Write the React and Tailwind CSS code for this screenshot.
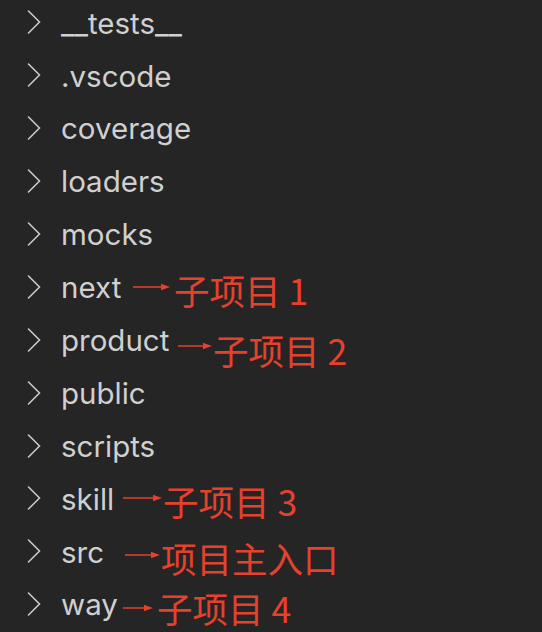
import React from "react";

const rows = [
  { name: "__tests__" },
  { name: ".vscode" },
  { name: "coverage" },
  { name: "loaders" },
  { name: "mocks" },
  { name: "next", note: { x1: 133, x2: 170, ay: 0, tx: 174, ty: 3, text: "子项目 1" } },
  { name: "product", note: { x1: 178, x2: 212, ay: 6, tx: 213, ty: 10, text: "子项目 2" } },
  { name: "public" },
  { name: "scripts" },
  { name: "skill", note: { x1: 123, x2: 162, ay: 0, tx: 163, ty: 2, text: "子项目 3" } },
  { name: "src", note: { x1: 125, x2: 160, ay: 4, tx: 161, ty: 6, text: "项目主入口" } },
  { name: "way", note: { x1: 123, x2: 153, ay: 4, tx: 157, ty: 4, text: "子项目 4" } },
];

function Chevron() {
  return (
    <svg width="14" height="24" viewBox="0 0 14 24" className="shrink-0">
      <polyline points="1.5,1 12.5,12 1.5,23" fill="none" stroke="#c8c8c8" strokeWidth="1.6" strokeLinejoin="miter" strokeLinecap="round" />
    </svg>
  );
}

function Arrow({ w }) {
  return (
    <svg width={w} height="10" viewBox={`0 0 ${w} 10`}>
      <line x1="0" y1="5" x2={w - 7} y2="5" stroke="#e6412c" strokeWidth="1.5" />
      <polygon points={`${w - 9},1.8 ${w},5 ${w - 9},8.2`} fill="#e6412c" />
    </svg>
  );
}

export default function App() {
  return (
    <div className="w-[542px] h-[632px] bg-[#252526] overflow-hidden">
      <div className="mt-[-4px]">
        {rows.map((r) => (
          <div key={r.name} className="relative h-[52.9px] flex items-center pl-[27px]">
            <Chevron />
            <span
              className="ml-[20px] text-[29.5px] leading-none text-[#d0d0d0] whitespace-nowrap translate-y-[1px]"
              style={{ fontFamily: "Inter, 'Noto Sans', sans-serif" }}
            >
              {r.name}
            </span>
            {r.note && (
              <>
                <div
                  className="absolute top-0 h-full flex items-center"
                  style={{ left: r.note.x1, transform: `translateY(${r.note.ay}px)` }}
                >
                  <Arrow w={r.note.x2 - r.note.x1} />
                </div>
                <div
                  className="absolute top-0 h-full flex items-center text-[#e6412c] text-[35.5px] font-normal leading-none whitespace-nowrap"
                  style={{
                    left: r.note.tx,
                    transform: `translateY(${r.note.ty}px)`,
                    fontFamily: "'Noto Sans CJK SC', 'Noto Sans', sans-serif",
                  }}
                >
                  {r.note.text}
                </div>
              </>
            )}
          </div>
        ))}
      </div>
    </div>
  );
}
